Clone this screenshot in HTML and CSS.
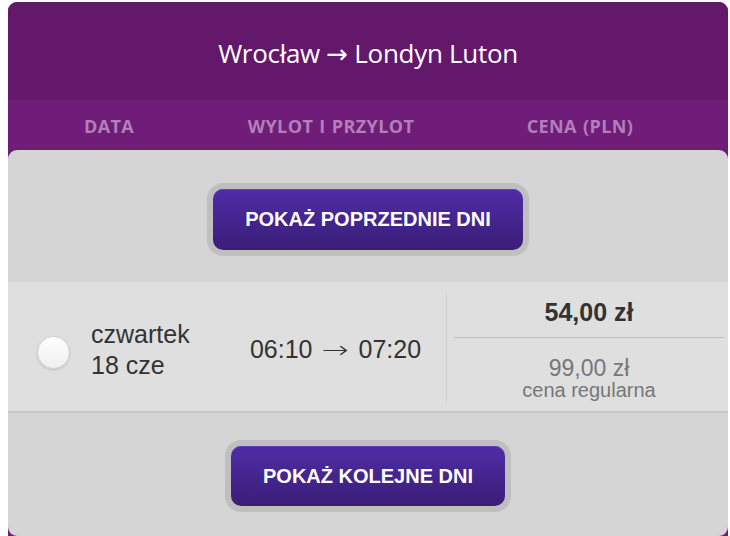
FILE: index.html
```html
<!DOCTYPE html>
<html lang="pl">
<head>
    <meta charset="UTF-8">
    <meta name="viewport" content="width=device-width, initial-scale=1.0">
    <title>Wrocław → Londyn Luton</title>
    <link rel="stylesheet" href="styles.css">
</head>
<body>
    <div class="flight-card">
        <div class="route">
            <h1>Wrocław → Londyn Luton</h1>
        </div>

        <div class="columns">
            <span>DATA</span>
            <span>WYLOT I PRZYLOT</span>
            <span>CENA (PLN)</span>
        </div>

        <div class="panel">
            <div class="more more-top">
                <button type="button" class="more-btn">POKAŻ POPRZEDNIE DNI</button>
            </div>

            <div class="flight-row">
                <span class="radio"></span>
                <div class="date">
                    czwartek<br>
                    18 cze
                </div>
                <div class="times">06:10 <span class="arrow">→</span> 07:20</div>
                <div class="price">
                    <div class="price-now">54,00 zł</div>
                    <div class="price-old">
                        <div class="old-value">99,00 zł</div>
                        <div class="old-label">cena regularna</div>
                    </div>
                </div>
            </div>

            <div class="more more-bottom">
                <button type="button" class="more-btn">POKAŻ KOLEJNE DNI</button>
            </div>
        </div>
    </div>
</body>
</html>
```

FILE: styles.css
```css
* {
    margin: 0;
    padding: 0;
    box-sizing: border-box;
}

body {
    background: white;
    padding: 2px 2px 0 8px;
    font-family: "Liberation Sans", Arial, sans-serif;
    color: #333;
}

.flight-card {
    width: 720px;
    background: #701c79;
    border-radius: 9px 9px 0 0;
    overflow: hidden;
}

/* header */
.route {
    background: #64186b;
    height: 98px;
    display: flex;
    align-items: center;
    justify-content: center;
}

.route h1 {
    font-family: "Open Sans", "DejaVu Sans", sans-serif;
    font-weight: 400;
    font-size: 26px;
    letter-spacing: -0.3px;
    color: white;
    padding-top: 3px;
}

.columns {
    height: 50px;
    display: grid;
    grid-template-columns: 202px 242px 1fr;
    padding-right: 20px;
    align-items: center;
    font-family: "Open Sans", sans-serif;
    font-weight: 700;
    font-size: 18px;
    letter-spacing: 0.4px;
    word-spacing: 1px;
    color: #b27fba;
    text-align: center;
    padding-top: 2px;
}

/* grey body */
.panel {
    background: #d5d5d5;
    border-radius: 9px;
    height: 386px;
}

.more {
    display: flex;
    justify-content: center;
}

.more-top {
    padding: 39px 0 32px;
}

.more-bottom {
    padding: 33px 0 29px;
}

.more-btn {
    height: 61px;
    padding: 0 32px;
    border: none;
    border-radius: 10px;
    background: linear-gradient(#4f2ca8, #3a1e77);
    box-shadow: 0 0 0 6px #bfbfbf, inset 0 1px 0 #6040c0;
    color: white;
    font-family: "Liberation Sans", Arial, sans-serif;
    font-weight: bold;
    font-size: 20px;
    cursor: pointer;
}

.more-bottom .more-btn {
    height: 60px;
}

/* flight row */
.flight-row {
    background: #dfdfdf;
    border-bottom: 2px solid #c8c8c8;
    height: 131px;
    display: flex;
    align-items: center;
    padding: 12px 0 9px 29px;
}

.radio {
    width: 33px;
    height: 33px;
    border-radius: 50%;
    background: linear-gradient(#ffffff, #efefef);
    border: 1px solid #d0d0d0;
    box-shadow: 0 1px 2px rgba(0, 0, 0, 0.15);
    margin-top: 8px;
}

.date {
    width: 159px;
    padding-left: 21px;
    font-size: 25px;
    line-height: 31px;
    padding-top: 4px;
}

.times {
    flex: 1;
    text-align: center;
    font-size: 25px;
    padding-top: 2px;
    padding-right: 4px;
}

.times .arrow {
    font-family: "DejaVu Sans", sans-serif;
    font-weight: 200;
    font-size: 24px;
    display: inline-block;
    transform: scaleX(1.35);
    margin: 0 6px;
}

.price {
    width: 282px;
    align-self: stretch;
    border-left: 1px solid #cdcdcd;
    padding: 4px 4px 0 7px;
    text-align: center;
}

.price-now {
    font-weight: bold;
    font-size: 25px;
    line-height: 28px;
    padding-bottom: 11px;
    border-bottom: 1px solid #c0c0c0;
}

.price-old {
    color: #777;
    padding-top: 18px;
}

.old-value {
    font-size: 23px;
    line-height: 24px;
}

.old-label {
    font-size: 20px;
    line-height: 20px;
}
```
